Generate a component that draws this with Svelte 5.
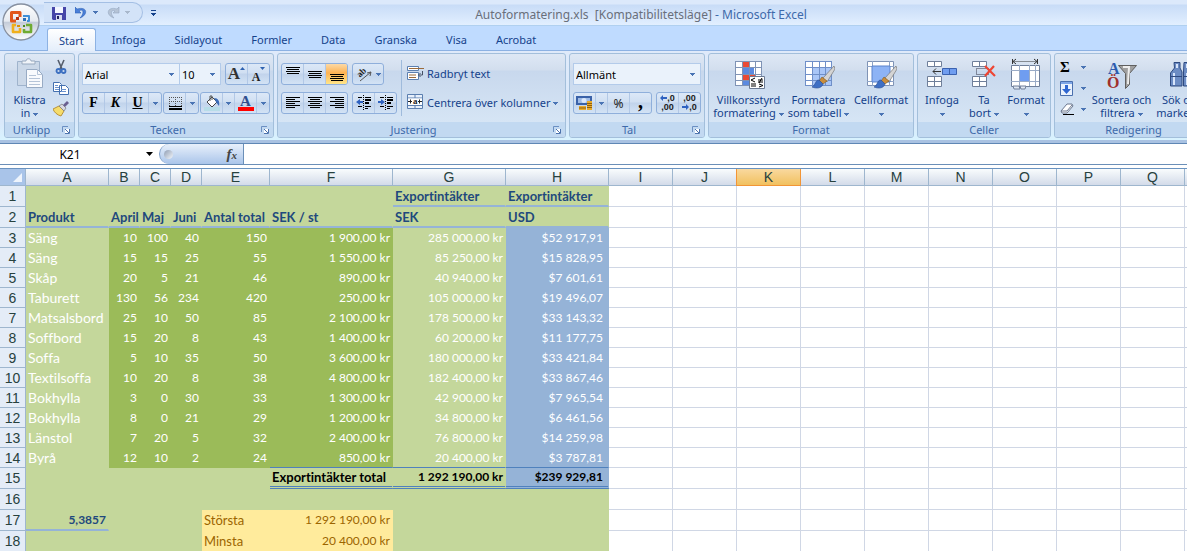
<script lang="ts">
  type Cell = { col: string; text: string; kind: string };

  const tabs = ["Start", "Infoga", "Sidlayout", "Formler", "Data", "Granska", "Visa", "Acrobat"];
  const columns = "ABCDEFGHIJKLMNOPQR".split("");

  // Produkt, april, maj, juni, antal, pris, SEK, USD
  const products = [
    ["Säng", "10", "100", "40", "150", "1 900,00 kr", "285 000,00 kr", "$52 917,91"],
    ["Säng", "15", "15", "25", "55", "1 550,00 kr", "85 250,00 kr", "$15 828,95"],
    ["Skåp", "20", "5", "21", "46", "890,00 kr", "40 940,00 kr", "$7 601,61"],
    ["Taburett", "130", "56", "234", "420", "250,00 kr", "105 000,00 kr", "$19 496,07"],
    ["Matsalsbord", "25", "10", "50", "85", "2 100,00 kr", "178 500,00 kr", "$33 143,32"],
    ["Soffbord", "15", "20", "8", "43", "1 400,00 kr", "60 200,00 kr", "$11 177,75"],
    ["Soffa", "5", "10", "35", "50", "3 600,00 kr", "180 000,00 kr", "$33 421,84"],
    ["Textilsoffa", "10", "20", "8", "38", "4 800,00 kr", "182 400,00 kr", "$33 867,46"],
    ["Bokhylla", "3", "0", "30", "33", "1 300,00 kr", "42 900,00 kr", "$7 965,54"],
    ["Bokhylla", "8", "0", "21", "29", "1 200,00 kr", "34 800,00 kr", "$6 461,56"],
    ["Länstol", "7", "20", "5", "32", "2 400,00 kr", "76 800,00 kr", "$14 259,98"],
    ["Byrå", "12", "10", "2", "24", "850,00 kr", "20 400,00 kr", "$3 787,81"],
  ];

  const sheet: string[][] = [
    ["", "", "", "", "", "", "Exportintäkter", "Exportintäkter"],
    ["Produkt", "April", "Maj", "Juni", "Antal total", "SEK / st", "SEK", "USD"],
    ...products,
    ["", "", "", "", "", "Exportintäkter total", "1 292 190,00 kr", "$239 929,81"],
    [],
    ["5,3857", "", "", "", "Största", "1 292 190,00 kr"],
    ["", "", "", "", "Minsta", "20 400,00 kr"],
  ];

  function kindOf(row: number, c: number): string {
    if (c > 7) return "";
    if (row === 1) return c > 5 ? "used head rule" : "used";
    if (row === 2) return "used head rule";
    if (row <= 14) {
      let k = "used";
      if (c === 0) k += " product";
      if (c > 0) k += " num";
      if (c > 0 && c < 6) k += " dark";
      if (c === 7) k += " usd";
      if (row === 14 && c > 4) k += " thin";
      return k;
    }
    if (row === 15 && c === 5) return "used total";
    if (row === 15 && c > 5) return "used total num" + (c === 7 ? " usd" : "");
    if (row === 17 && c === 0) return "used head rule num";
    if (row > 16 && c === 4) return "used neutral";
    if (row > 16 && c === 5) return "used neutral num";
    return "used";
  }

  const rows: Cell[][] = sheet.map((r, i) =>
    columns.map((col, c) => ({ col, text: r[c] ?? "", kind: kindOf(i + 1, c) }))
  );

  let activeTab = "Start";
  let font = "Arial";
  let size = "10";
  let format = "Allmänt";
  let nameBox = "K21";
  let formula = "";
</script>

{#snippet arrow()}
  <svg class="arrow" width="5" height="3" viewBox="0 0 5 3" aria-hidden="true" shape-rendering="crispEdges"><path d="M0 0h5v1H0zM1 1h3v1H1zM2 2h1v1H2z" /></svg>
{/snippet}

{#snippet lines(bars: number[][])}
  <svg width="16" height="16" viewBox="0 0 16 16" aria-hidden="true" shape-rendering="crispEdges">
    {#each bars as [x, y, w]}
      <rect {x} {y} width={w} height="1" fill="#000" />
    {/each}
  </svg>
{/snippet}

{#snippet brush()}
  <path d="M31 8L20 20l4 4 8-13z" fill="#d4d4d4" stroke="#777" stroke-width=".7" />
  <path d="M19 19l-3 4 4 3 4-3z" fill="#c98d3c" stroke="#80591f" stroke-width=".6" />
  <path d="M16 22c-4 0-3 5-7 7 5 2 10 1 11-3z" fill="#3e6fc4" stroke="#284d96" stroke-width=".6" />
{/snippet}

{#snippet launcher()}
  <svg width="8" height="8" viewBox="0 0 8 8"><path d="M.5 6V.5H6" fill="none" stroke="#6b8fc2" /><path d="M3 3h5v5H3z" fill="#fff" /><path d="M3 3l4 4M7.500 3v4.500H3" stroke="#4c73ad" fill="none" /></svg>
{/snippet}

<div class="window">
  <header class="titlebar">
    <div class="quick">
      <button title="Spara">
        <svg width="14" height="14" viewBox="0 0 14 14"><path d="M0 1h14v13H1l-1-1z" fill="#4646a8" /><path d="M3 1h8v6H3z" fill="#f4f6ff" /><path d="M4 9h6v5H4z" fill="#d8dcf0" /><path d="M5 10h2v3H5z" fill="#22225e" /></svg>
      </button>
      <button title="Ångra">
        <svg width="13" height="13" viewBox="0 0 13 13"><path d="M0 1v6h6L4 5c4-3 6 2 1 7 8-3 8-12-3-9z" fill="#4a7fd8" stroke="#2c5fb5" stroke-width=".6" /></svg>
      </button>
      <button title="Ångra flera">{@render arrow()}</button>
      <button title="Gör om" class="off">
        <svg width="13" height="13" viewBox="0 0 13 13"><path d="M12 1v6H6l2-2C4 3 3 8 7 12-2 9 0 0 10 3z" fill="#b5c3d6" stroke="#94a6bf" stroke-width=".6" /></svg>
      </button>
      <button title="Gör om flera" class="off">{@render arrow()}</button>
    </div>
    <button class="customize" title="Anpassa verktygsfältet">
      <svg width="5" height="6" viewBox="0 0 5 6" shape-rendering="crispEdges"><path d="M0 0h5v1H0zM0 3h5v1H0zM1 4h3v1H1zM2 5h1v1H2z" fill="#15428b" /></svg>
    </button>
    <h1><span>Autoformatering.xls&nbsp; [Kompatibilitetsläge]</span> - Microsoft Excel</h1>
  </header>

  <button class="office" title="Office-knappen">
    <svg width="38" height="38" viewBox="0 0 38 38">
      <defs>
        <linearGradient id="orb" x1="0" y1="0" x2="0" y2="1">
          <stop offset="0" stop-color="#fff" />
          <stop offset=".48" stop-color="#e6eaf0" />
          <stop offset=".5" stop-color="#c3cbd8" />
          <stop offset="1" stop-color="#fff" />
        </linearGradient>
      </defs>
      <circle cx="19" cy="19" r="18" fill="url(#orb)" stroke="#8790a0" stroke-width="1.3" />
      <g fill="none" stroke-width="3" stroke-linejoin="round">
        <path d="M14 18H9.500V9.500H18V14" stroke="#e2571b" />
        <path d="M21 13h6v5h-2" stroke="#3e8fd8" stroke-width="2" />
        <path d="M14 22h-3v7h7v-4" stroke="#f0b01d" stroke-width="2.600" />
        <path d="M24 22h5v7h-7v-3" stroke="#6fab32" stroke-width="2.600" />
      </g>
      <path d="M14 14h3v3h-3z" fill="#b83010" />
      <path d="M21 15h3v3h-3z" fill="#2a6fb8" />
      <path d="M15 22h3v2h-3z" fill="#d8930c" />
      <path d="M21 22h2v2h-2z" fill="#4b8a1c" />
    </svg>
  </button>

  <nav class="tabs">
    {#each tabs as tab}
      <button class="tab" class:active={tab === activeTab} on:click={() => (activeTab = tab)}>{tab}</button>
    {/each}
  </nav>

  <div class="ribbon">
    <section class="group">
      <div class="body">
        <button class="big paste">
          <svg width="32" height="32" viewBox="0 0 32 32"><path d="M3.500 3.500h22v24h-22z" fill="#cbd8e8" stroke="#9fb3cc" /><path d="M8 6V3h4c0-3 5-3 5 0h4v3z" fill="#f0f4f9" stroke="#98a9be" /><path d="M12.500 11.500h11l5 5v13h-16z" fill="#f8fafd" stroke="#98abc4" /><path d="M23.500 11v5.500h5M15 17.500h7M15 20.500h11M15 23.500h11M15 26.500h11" fill="none" stroke="#b5c4d8" /></svg>
          <span>Klistra<br />in {@render arrow()}</span>
        </button>
        <div class="stack">
          <button title="Klipp ut">
            <svg width="16" height="16" viewBox="0 0 16 16"><path d="M5 1l4 9M11 1L7 10" stroke="#555d6b" stroke-width="1.600" /><circle cx="5.500" cy="12" r="2" fill="none" stroke="#3c6fc0" stroke-width="1.800" /><circle cx="10.500" cy="12" r="2" fill="none" stroke="#3c6fc0" stroke-width="1.800" /></svg>
          </button>
          <button title="Kopiera">
            <svg width="16" height="16" viewBox="0 0 16 16"><path d="M.5 2.500h6l2 2v7h-8zM6.500 5.500h6l3 3v6h-9z" fill="#fff" stroke="#4470b0" /><path d="M2 5.500h3M2 7.500h4M2 9.500h4M8 9.500h5M8 11.500h5" stroke="#6b93cf" /></svg>
          </button>
          <button title="Hämta format">
            <svg width="16" height="16" viewBox="0 0 16 16"><path d="M0 8l6-3 5 5-3 5C4 14 1 11 0 8z" fill="#f5dc6b" stroke="#b8923a" /><path d="M6 5l5 5 2-3-4-4z" fill="#d8d8e0" stroke="#777" stroke-width=".7" /><path d="M10 4l4-4 2 2-4 4z" fill="#6a5f8f" /></svg>
          </button>
        </div>
      </div>
      <footer><span>Urklipp</span><button class="launch" title="Urklipp, mer">{@render launcher()}</button></footer>
    </section>

    <section class="group">
      <div class="body rows font">
        <div class="line">
          <div class="combo face">
            <select aria-label="Teckensnitt" bind:value={font}><option>Arial</option><option>Calibri</option></select>
            {@render arrow()}
          </div>
          <div class="combo points">
            <select aria-label="Teckenstorlek" bind:value={size}><option>10</option><option>11</option></select>
            {@render arrow()}
          </div>
          <div class="set end">
            <button class="glyph" title="Öka teckenstorlek"><b class="lg">A</b><svg class="up" width="5" height="3" viewBox="0 0 5 3"><path d="M0 3h5L2.500 0z" fill="#2f62b0" /></svg></button>
            <button class="glyph" title="Minska teckenstorlek"><b class="sm">A</b><svg class="up" width="5" height="3" viewBox="0 0 5 3"><path d="M0 0h5L2.500 3z" fill="#2f62b0" /></svg></button>
          </div>
        </div>
        <div class="line spread">
          <div class="set">
            <button class="glyph" title="Fet"><b>F</b></button>
            <button class="glyph" title="Kursiv"><b><i>K</i></b></button>
            <button class="glyph" title="Understruken"><b><u>U</u></b></button>
            <button class="drop" title="Understrykning">{@render arrow()}</button>
          </div>
          <div class="set">
            <button title="Kantlinjer">
              <svg width="16" height="16" viewBox="0 0 16 16"><path d="M2 2.500h13M2 6.500h13M2.500 2v9M8.500 2v9M14.500 2v9" stroke="#555" stroke-dasharray="1 1" /><path d="M2 11h13v1H2zM2 13h13v2H2z" fill="#000" /></svg>
            </button>
            <button class="drop" title="Fler kantlinjer">{@render arrow()}</button>
          </div>
          <div class="set">
            <button title="Fyllningsfärg">
              <svg width="16" height="16" viewBox="0 0 16 16"><path d="M0 12h16v4H0z" fill="#b7dde8" /><path d="M3 7l5-5 5 5-5 5z" fill="#fff" stroke="#444" /><path d="M6 6V1h2v4" fill="none" stroke="#555" /><path d="M10 3c4 0 6 3 5 8l-3-4z" fill="#3b6cb7" /></svg>
            </button>
            <button class="drop" title="Fler fyllningsfärger">{@render arrow()}</button>
            <button class="glyph colour" title="Teckenfärg"><b>A</b></button>
            <button class="drop" title="Fler teckenfärger">{@render arrow()}</button>
          </div>
        </div>
      </div>
      <footer><span>Tecken</span><button class="launch" title="Tecken, mer">{@render launcher()}</button></footer>
    </section>

    <section class="group">
      <div class="body">
        <div class="rows">
          <div class="line gap">
            <div class="set">
              <button title="Justera överst">{@render lines([[1, 1, 14], [2, 3, 12], [1, 5, 14], [2, 7, 12]])}</button>
              <button title="Centrera lodrätt">{@render lines([[1, 5, 14], [2, 7, 12], [1, 9, 14], [2, 11, 12]])}</button>
              <button class="on" title="Justera nederst">{@render lines([[1, 8, 14], [2, 10, 12], [1, 12, 14], [2, 14, 12]])}</button>
            </div>
            <div class="set">
              <button class="orient" title="Orientering">
                <svg width="17" height="16" viewBox="0 0 17 16"><text x="2" y="11" transform="rotate(-45 4 9)" class="ab">ab</text><path d="M4 15l11-9M15 6l-4 1M15 6l-1 4" stroke="#555" fill="none" /></svg>
                {@render arrow()}
              </button>
            </div>
          </div>
          <div class="line gap">
            <div class="set">
              <button title="Vänsterjustera">{@render lines([[1, 2, 14], [1, 4, 9], [1, 6, 14], [1, 8, 9], [1, 10, 14], [1, 12, 9]])}</button>
              <button title="Centrera">{@render lines([[1, 2, 14], [3, 4, 10], [1, 6, 14], [3, 8, 10], [1, 10, 14], [3, 12, 10]])}</button>
              <button title="Högerjustera">{@render lines([[1, 2, 14], [6, 4, 9], [1, 6, 14], [6, 8, 9], [1, 10, 14], [6, 12, 9]])}</button>
            </div>
            <div class="set">
              <button title="Minska indrag">
                <svg width="16" height="16" viewBox="0 0 16 16"><path d="M7.500 0v16" stroke="#000" stroke-dasharray="1 1" /><path d="M2 2h4v1H2zM9 2h6v1H9zM9 4h6v2H9zM9 7h4v2H9zM2 11h4v1H2zM9 11h6v1H9zM9 13h3v1H9z" fill="#000" /><path d="M0 7l4-3v2h3v2H4v2z" fill="#2f62c0" /></svg>
              </button>
              <button title="Öka indrag">
                <svg width="16" height="16" viewBox="0 0 16 16"><path d="M7.500 0v16" stroke="#000" stroke-dasharray="1 1" /><path d="M2 2h4v1H2zM9 2h6v1H9zM9 4h6v2H9zM9 7h4v2H9zM2 11h4v1H2zM9 11h6v1H9zM9 13h3v1H9z" fill="#000" /><path d="M7 7L3 4v2H0v2h3v2z" fill="#2f62c0" /></svg>
              </button>
            </div>
          </div>
        </div>
        <div class="rows flat">
          <button class="wide-label">
            <svg width="17" height="16" viewBox="0 0 17 16"><path d="M.5 1.500h11v4H.5zM.5 7.500h11v7H.5z" fill="#fff" stroke="#5b7fb0" /><path d="M2 3.500h15M2 10h7M2 12.500h7" stroke="#9b6a3a" /><path d="M15.500 6v4h-3m1-2l-2 2 2 2" fill="none" stroke="#444f63" /></svg>
            <span>Radbryt text</span>
          </button>
          <button class="wide-label">
            <svg width="17" height="16" viewBox="0 0 17 16"><path d="M.5 .5h15v14H.5z" fill="#e8f0fb" stroke="#5b7fb0" /><path d="M8 1v3M8 12v3M1 4h14M1 11.500h14" stroke="#5b7fb0" /><path d="M1 4.500h14v6.500H1z" fill="#fff" /><path d="M1 7.500h4M15 7.500h-4M3.500 5.500v4M12.500 5.500v4" stroke="#222" /><text x="6" y="10" class="ab">a</text></svg>
            <span>Centrera över kolumner {@render arrow()}</span>
          </button>
        </div>
      </div>
      <footer><span>Justering</span><button class="launch" title="Justering, mer">{@render launcher()}</button></footer>
    </section>

    <section class="group">
      <div class="body rows">
        <div class="line">
          <div class="combo number">
            <select aria-label="Talformat" bind:value={format}><option>Allmänt</option><option>Valuta</option></select>
            {@render arrow()}
          </div>
        </div>
        <div class="line spread">
          <div class="set">
            <button title="Redovisningsformat">
              <svg width="17" height="16" viewBox="0 0 17 16"><path d="M0 1h16v9H0z" fill="#3b62a8" /><path d="M2 3h12v5H2z" fill="#9fbbe6" /><circle cx="8" cy="5.500" r="2.500" fill="#dbe8fb" /><path d="M11 6h5v9h-5zM3 11h7v4H3z" fill="#e9ac2d" /><path d="M11 8.500h5M11 10.500h5M11 12.500h5M3 13h7" stroke="#925f0d" /></svg>
            </button>
            <button class="drop" title="Fler valutor">{@render arrow()}</button>
            <button class="sign" title="Procent">%</button>
            <button class="glyph comma" title="Tusental"><b>,</b></button>
          </div>
          <div class="set">
            <button class="dec" title="Öka decimal"><span><svg width="7" height="6" viewBox="0 0 7 6"><path d="M0 3l3-3v2h4v2H3v2z" fill="#2f62c0" /></svg>,0</span><span>,00</span></button>
            <button class="dec" title="Minska decimal"><span>,00</span><span><svg width="7" height="6" viewBox="0 0 7 6"><path d="M7 3L4 0v2H0v2h4v2z" fill="#2f62c0" /></svg>,0</span></button>
          </div>
        </div>
      </div>
      <footer><span>Tal</span><button class="launch" title="Tal, mer">{@render launcher()}</button></footer>
    </section>

    <section class="group">
      <div class="body">
        <button class="big w73">
          <svg width="32" height="32" viewBox="0 0 32 32"><path d="M2 3h27v25H2z" fill="#fff" /><path d="M9 3h7v25H9z" fill="#5b8ae0" /><path d="M9 3h7v6H9zM9 16h13v6H9z" fill="#ea4a35" /><path d="M9 10h12v6H9z" fill="#5b8ae0" /><path d="M2.500 3v25M9.500 3v25M16.500 3v25M22.500 3v25M28.500 3v25M2 3.500h27M2 9.500h27M2 16.500h27M2 22.500h27M2 27.500h27" stroke="#7f93b5" /><path d="M16.500 18.500h15v12h-15z" fill="#fff" stroke="#6a7a94" /><path d="M22 20l-4 2 4 2M18 26h5M18 28h5M25 22h5M25 24h5M29 20l-3 5M26 26l4 1.500-4 1.500" fill="none" stroke="#000" /></svg>
          <span>Villkorsstyrd<br />formatering {@render arrow()}</span>
        </button>
        <button class="big w67">
          <svg width="32" height="32" viewBox="0 0 32 32"><path d="M2 3h27v25H2z" fill="#fff" /><path d="M9 10h20v18H9z" fill="#a9c6f7" /><path d="M2.500 3v25M9.500 3v25M16.500 3v25M22.500 3v25M28.500 3v25M2 3.500h27M2 9.500h27M2 16.500h27M2 22.500h27M2 27.500h27" stroke="#6f8fc8" />{@render brush()}</svg>
          <span>Formatera<br />som tabell {@render arrow()}</span>
        </button>
        <button class="big w58">
          <svg width="32" height="32" viewBox="0 0 32 32"><path d="M2.500 3.500h26v24h-26z" fill="#fff" stroke="#7f93b5" /><path d="M7.500 3v25M24.500 3v25M2 8.500h27M2 23.500h27" stroke="#8fa4c6" /><path d="M7 8h18v16H7z" fill="#8db3f5" stroke="#5b83cc" />{@render brush()}</svg>
          <span>Cellformat<br />{@render arrow()}</span>
        </button>
      </div>
      <footer><span>Format</span></footer>
    </section>

    <section class="group">
      <div class="body">
        <button class="big w42">
          <svg width="32" height="32" viewBox="0 0 32 32"><path d="M1.500 3.500h14v5h-14zM8.500 3v5M1.500 18.500h14v10h-14zM8.500 18v10M1 23.500h14" fill="#fff" stroke="#6f7f9a" /><path d="M16.500 10.500h14v6h-14z" fill="#6f9df0" stroke="#3a62b0" /><path d="M23.500 10v7" stroke="#3a62b0" /><path d="M7 13.500h8M10 10.500l-3 3 3 3" fill="none" stroke="#333" /></svg>
          <span>Infoga<br />{@render arrow()}</span>
        </button>
        <button class="big w42">
          <svg width="32" height="32" viewBox="0 0 32 32"><path d="M4.500 3.500h14v5h-14zM11.500 3v5M4.500 18.500h14v10h-14zM11.500 18v10M4 23.500h14" fill="#fff" stroke="#6f7f9a" /><path d="M8.500 10.500h12v6h-12z" fill="none" stroke="#334" stroke-dasharray="1 1" /><path d="M17 8l10 10M26 8L17 18" stroke="#ee4634" stroke-width="2.200" /></svg>
          <span>Ta<br />bort {@render arrow()}</span>
        </button>
        <button class="big w42">
          <svg width="32" height="32" viewBox="0 0 32 32"><path d="M2.500 3.500h25" stroke="#333" stroke-dasharray="1 1" /><path d="M2.500 1v5M27.500 1v5M6 1L3 3.500 6 6M24 1l3 2.500L24 6" fill="none" stroke="#333" /><path d="M1.500 7.500h28v21h-28z" fill="#fff" stroke="#6f7f9a" /><path d="M9.500 7v21M19.500 7v21M25.500 7v21M1 12.500h28M1 23.500h28" stroke="#9aabc6" /><path d="M10 12h9v11h-9z" fill="#6f9df0" /><path d="M3 28h6l1 3H4zM10 28h6l-1 3h-4z" fill="#dfe7f2" stroke="#6f7f9a" /></svg>
          <span>Format<br />{@render arrow()}</span>
        </button>
      </div>
      <footer><span>Celler</span></footer>
    </section>

    <section class="group">
      <div class="body">
        <div class="stack edit">
          <button title="Autosumma"><b class="sigma">Σ</b>{@render arrow()}</button>
          <button title="Fyll">
            <svg width="13" height="15" viewBox="0 0 13 15"><path d="M.5 .5h12v14H.5z" fill="#eaf2fd" stroke="#4a6fae" /><path d="M1 1h11v2H1z" fill="#7fa6e6" /><path d="M5 4h3v4h3l-4.500 5L2 8h3z" fill="#2f66d0" /></svg>{@render arrow()}
          </button>
          <button title="Radera">
            <svg width="14" height="13" viewBox="0 0 14 13"><path d="M1 8l6-7h5l1 2-6 7H2z" fill="#fff" stroke="#6b7890" /><path d="M1 8h6l5-6" fill="none" stroke="#6b7890" /><path d="M3 11.500h11" stroke="#000" /></svg>{@render arrow()}
          </button>
        </div>
        <button class="big w67">
          <svg width="32" height="32" viewBox="0 0 32 32"><path d="M12.500 7.500h18l-7 8v11l-4 4V15.500z" fill="#a0a0a0" stroke="#5f5f5f" /><path d="M17 9h6l-1 17" fill="none" stroke="#eee" stroke-width="2" /><text x="2" y="16" class="sort a">A</text><text x="1" y="30" class="sort o">Ö</text></svg>
          <span>Sortera och<br />filtrera {@render arrow()}</span>
        </button>
        <button class="big w54">
          <svg width="32" height="32" viewBox="0 0 32 32"><path d="M8 4.500h6V10l2 4v14H4.500V15l4-5zM18 4.500h6V10l4 5v13H17.500V14z" fill="#6c8cc4" stroke="#2f4a80" /><path d="M8 15v12M21 15v12M11 6v4M21 6v4" stroke="#d8e5fb" stroke-width="2" /><path d="M5 18.500h11M18 18.500h9" stroke="#2f4a80" /></svg>
          <span>Sök och<br />markera {@render arrow()}</span>
        </button>
      </div>
      <footer><span>Redigering</span></footer>
    </section>
  </div>

  <div class="formula">
    <input class="name" aria-label="Namnruta" bind:value={nameBox} />
    <button class="name-drop" title="Namn"><svg width="7" height="4" viewBox="0 0 7 4"><path d="M0 0h7L3.500 4z" /></svg></button>
    <button class="fx" title="Infoga funktion"><span class="knob"></span><i>f<small>x</small></i></button>
    <input class="entry" aria-label="Formelfält" bind:value={formula} />
  </div>

  <div class="sheet">
    <table>
      <colgroup>
        <col class="w-row" />
        {#each columns as col}
          <col class="w-{col.toLowerCase()}" />
        {/each}
      </colgroup>
      <thead>
        <tr>
          <th class="corner" aria-label="Markera allt"><svg width="9" height="9" viewBox="0 0 9 9"><path d="M9 0v9H0z" fill="#eef4fc" /></svg></th>
          {#each columns as col}
            <th class:current={col === "K"}>{col}</th>
          {/each}
        </tr>
      </thead>
      <tbody>
        {#each rows as row, i}
          <tr class:low={i > 1 && i < 14}>
            <th>{i + 1}</th>
            {#each row as cell (cell.col)}
              <td class={cell.kind}>{cell.text}</td>
            {/each}
          </tr>
        {/each}
      </tbody>
    </table>
  </div>
</div>

<style>
  :global(body) {
    overflow: hidden;
  }
  .window {
    position: relative;
    overflow: hidden;
    background: #fff;
    color: #15428b;
    font: 11px/13px "Noto Sans", "Open Sans", sans-serif;
  }
  button {
    display: flex;
    align-items: center;
    justify-content: center;
    margin: 0;
    padding: 0;
    border: 0;
    background: none;
    color: inherit;
    font: inherit;
    white-space: nowrap;
  }
  .arrow {
    flex: none;
    fill: #4a74b4;
    vertical-align: middle;
  }

  .titlebar {
    display: flex;
    align-items: center;
    height: 25px;
    padding-left: 44px;
    border-bottom: 1px solid #b0d0f0;
    background: linear-gradient(#dce9fb 0, #dce9fb 4px, #c8dcf7 5px, #e2efff 100%);
  }
  .quick {
    display: flex;
    align-items: center;
    gap: 5px;
    height: 19px;
    padding: 0 12px 0 8px;
    border: 1px solid #a4bfe4;
    border-left: 0;
    border-radius: 0 11px 11px 0;
    background: #d3e3f8;
  }
  .quick button:nth-child(2),
  .quick button:nth-child(4) {
    margin-left: 4px;
  }
  .quick .off .arrow {
    fill: #a9b8cc;
  }
  .customize {
    margin-left: 4px;
    width: 12px;
  }
  h1 {
    flex: 1;
    margin: 0;
    padding: 4px 64px 0 0;
    color: #3e6aaa;
    font-size: 12px;
    font-weight: 400;
    line-height: 16px;
    text-align: center;
    white-space: nowrap;
  }
  h1 span {
    color: #696f7b;
  }
  .office {
    position: absolute;
    top: 3px;
    left: 2px;
  }

  .tabs {
    display: flex;
    align-items: flex-end;
    gap: 1px;
    height: 24px;
    padding-left: 47px;
    border-bottom: 1px solid #8db2e3;
    background: #bfdbff;
  }
  .tab {
    height: 22px;
    padding: 0 14px;
  }
  .tab.active {
    margin: 0 1px -1px 0;
    height: 23px;
    padding: 0 11px;
    border: 1px solid #8db2e3;
    border-bottom: 0;
    border-radius: 3px 3px 0 0;
    background: linear-gradient(#fff, #e4eefb);
  }

  .ribbon {
    display: flex;
    gap: 3px;
    overflow: hidden;
    padding: 2px 0 2px 4px;
    background: linear-gradient(#dfeafa, #d9e8fa 80%, #d8f3ff);
  }
  .group {
    display: flex;
    flex: none;
    flex-direction: column;
    overflow: hidden;
    border: 1px solid #a3bfdb;
    border-radius: 3px;
    background: linear-gradient(#dee8f5 0, #d2deee 16px, #c8d8ed 17px, #dae9f7 100%);
  }
  .body {
    display: flex;
    height: 68px;
    padding: 0 3px;
  }
  footer {
    display: flex;
    align-items: center;
    height: 15px;
    background: #c2d9f1;
    color: #3e6aaa;
  }
  footer span {
    flex: 1;
    text-align: center;
  }
  .launch {
    width: 16px;
  }
  .rows {
    display: flex;
    flex-direction: column;
    gap: 7px;
    padding-top: 9px;
  }
  .body.rows {
    height: 59px;
  }
  .body.font {
    width: 188px;
  }
  .line {
    display: flex;
    height: 22px;
  }
  .spread {
    justify-content: space-between;
  }
  .gap {
    gap: 4px;
  }
  .set {
    display: flex;
    box-sizing: border-box;
    height: 22px;
    overflow: hidden;
    border: 1px solid #8fafdb;
    border-radius: 3px;
    background: linear-gradient(#dce8f7 0, #d0dff2 9px, #c1d3eb 10px, #d3e3f5 100%);
  }
  .set.end {
    margin-left: auto;
  }
  .set button {
    width: 22px;
    height: 20px;
    border-right: 1px solid #b2c8e6;
    box-sizing: border-box;
  }
  .set button:last-child {
    width: 21px;
    border-right: 0;
  }
  .set .drop,
  .set .drop:last-child {
    width: 12px;
  }
  .set .orient:last-child {
    width: 30px;
    gap: 3px;
  }
  .set .on {
    background: linear-gradient(#fcd9a5, #fdb252 45%, #fdc263 60%, #ffe589);
  }
  .glyph {
    color: #000;
    font: bold 14px/18px "Liberation Serif", serif;
  }
  .glyph .lg {
    color: #333;
    font-size: 17px;
  }
  .glyph .sm {
    padding-top: 5px;
    color: #222;
    font-size: 12px;
  }
  .glyph.comma {
    padding-bottom: 5px;
    font-size: 20px;
    line-height: 10px;
  }
  .up {
    align-self: flex-start;
    margin-top: 3px;
  }
  .colour {
    font-size: 15px;
    line-height: 12px;
  }
  .colour b {
    width: 16px;
    border-bottom: 4px solid #f00;
    color: #2f4f8f;
  }
  .sign {
    color: #222;
    font-size: 12px;
  }
  .set .dec {
    flex-direction: column;
    align-items: center;
    color: #222;
    font: bold 9px/9px "Liberation Sans", sans-serif;
  }
  .ab {
    fill: #222;
    font: bold 9px "Liberation Serif", serif;
  }
  .combo {
    display: flex;
    align-items: center;
    box-sizing: border-box;
    height: 22px;
    padding-right: 5px;
    border: 1px solid #b3cbea;
    background: #eaf2fb;
  }
  .combo select {
    flex: 1;
    min-width: 0;
    padding: 0 2px;
    border: 0;
    appearance: none;
    background: none;
    color: #000;
    font: inherit;
  }
  .face {
    width: 98px;
  }
  .points {
    width: 42px;
    margin-left: -1px;
  }
  .number {
    width: 128px;
  }

  .big {
    flex-direction: column;
    justify-content: flex-start;
    padding-top: 4px;
    text-align: center;
  }
  .big svg:first-child {
    flex: none;
  }
  .big span {
    padding-top: 3px;
  }
  .paste {
    width: 43px;
  }
  .w73 {
    width: 73px;
  }
  .w67 {
    width: 67px;
  }
  .w58 {
    width: 58px;
  }
  .w42 {
    width: 42px;
  }
  .w54 {
    width: 54px;
  }
  .stack {
    display: flex;
    flex-direction: column;
    justify-content: space-between;
    padding: 4px 2px;
  }
  .stack button {
    height: 18px;
  }
  .edit {
    width: 26px;
  }
  .edit button {
    justify-content: space-between;
  }
  .sigma {
    color: #000;
    font: bold 15px "Liberation Serif", serif;
  }
  .flat {
    margin: 6px 0 6px 4px;
    padding: 2px 0 0 5px;
    border-left: 1px solid #9fbbdc;
  }
  .wide-label {
    justify-content: flex-start;
    gap: 3px;
    width: 155px;
    height: 22px;
  }
  .sort {
    font: bold 16px "Liberation Serif", serif;
  }
  .sort.a {
    fill: #2d5cae;
  }
  .sort.o {
    fill: #a0302b;
  }

  .formula {
    display: flex;
    height: 20px;
    margin-top: 3px;
    border-top: 1px solid #5f87b5;
    border-bottom: 1px solid #6b8fb8;
    box-shadow: 0 -3px #a9c2e2;
  }
  .formula input {
    padding: 0;
    border: 0;
    outline: 0;
    color: #000;
    font: inherit;
    font-size: 12px;
  }
  .name {
    width: 140px;
    text-align: center;
  }
  .name-drop {
    width: 19px;
  }
  .fx {
    justify-content: space-between;
    width: 85px;
    padding: 0 6px 0 4px;
    border-left: 1px solid #7f9fc8;
    border-right: 1px solid #6b8fb8;
    border-radius: 10px 0 0 10px;
    background: linear-gradient(#e8f0fb, #aac5ea);
  }
  .fx i {
    color: #444;
    font: italic bold 15px "Liberation Serif", serif;
  }
  .fx small {
    font-size: 11px;
  }
  .knob {
    width: 9px;
    height: 9px;
    border-radius: 5px;
    background: linear-gradient(135deg, #8f9db3, #f4f7fb);
  }
  .entry {
    flex: 1;
    min-width: 0;
  }

  .sheet {
    overflow: hidden;
    margin-top: 3px;
    border-top: 1px solid #6a93c0;
  }
  table {
    width: 0;
    table-layout: fixed;
    border-spacing: 0;
    color: #fff;
    font: 13px/16px Lato, Calibri, sans-serif;
    font-variant-ligatures: none;
  }
  col {
    width: 64px;
  }
  .w-row {
    width: 26px;
  }
  .w-a {
    width: 83px;
  }
  .w-b,
  .w-c,
  .w-d {
    width: 31px;
  }
  .w-e {
    width: 68px;
  }
  .w-f {
    width: 123px;
  }
  .w-g {
    width: 113px;
  }
  .w-h {
    width: 103px;
  }
  th,
  td {
    box-sizing: border-box;
    height: 21px;
    padding: 0 2px;
    border-right: 1px solid #d0d7e5;
    border-bottom: 1px solid #d0d7e5;
    white-space: nowrap;
  }
  .low th,
  .low td {
    height: 20px;
  }
  th {
    padding: 0;
    border-color: #9eb6ce;
    background: #e4ecf7;
    color: #27413e;
    font: 14px/16px "Liberation Sans", sans-serif;
    text-align: center;
  }
  thead th {
    height: 17px;
    line-height: 15px;
    background: linear-gradient(#f9fcfd, #d3dbe9);
  }
  thead .current {
    border-color: #f29536;
    background: linear-gradient(#f9d99f, #f1c15f);
    box-shadow: -1px 0 #f29536;
  }
  thead .corner {
    padding-right: 3px;
    background: #a9c4e9;
    line-height: 9px;
    text-align: right;
  }
  .used {
    border-color: #c4d79b;
    background: #c4d79b;
  }
  .product {
    font-size: 14px;
  }
  .head {
    overflow: hidden;
    color: #1f497d;
    font-weight: 700;
  }
  .rule {
    border-bottom: 2px solid #95b3d7;
  }
  .num {
    font-size: 12px;
    text-align: right;
  }
  .dark {
    border-color: #9bbb59;
    background: #9bbb59;
  }
  .usd {
    padding-right: 5px;
    border-color: #95b3d7;
    background: #95b3d7;
  }
  .thin {
    border-bottom-color: #4f81bd;
  }
  .total {
    border-bottom: 3px double #4f81bd;
    color: #000;
    font-weight: 700;
  }
  .neutral {
    border-color: #ffeb9c;
    background: #ffeb9c;
    color: #9c6500;
  }
</style>
